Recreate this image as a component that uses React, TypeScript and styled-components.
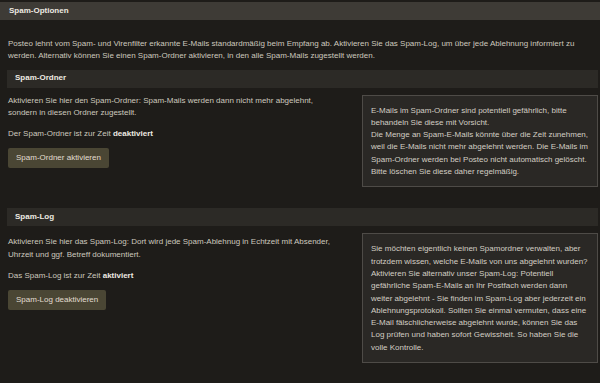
import styled, { createGlobalStyle } from "styled-components"

const GlobalStyle = createGlobalStyle`
	html, body {
		margin: 0;
		padding: 0;
		background: #1e1c19;
	}
	body {
		font-family: "Liberation Sans", Arial, sans-serif;
		font-size: 8px;
		line-height: 12.3px;
		color: #cdc8be;
	}
`

const Page = styled.div`
	min-height: 383px;
	padding-top: 2px;
	box-sizing: border-box;
	background: #1e1c19;
`

const MainHeader = styled.div`
	display: flex;
	align-items: center;
	height: 18px;
	padding-left: 9px;
	background: #3e3b36;
	color: #eeeae2;
	font-weight: bold;
`

const Intro = styled.p`
	margin: 18px 0 0;
	padding: 0 8px;
`

const Section = styled.section<{ $gap: number }>`
	margin: ${(p) => p.$gap}px 2px 0 7px;
`

const SubHeader = styled.div`
	display: flex;
	align-items: center;
	height: 18px;
	padding-left: 8px;
	background: #2c2a26;
	color: #eeeae2;
	font-weight: bold;
`

const Row = styled.div`
	display: flex;
	align-items: flex-start;
	margin-top: 7px;
`

const LeftCol = styled.div<{ $top: number }>`
	flex: 1;
	padding: ${(p) => p.$top}px 12px 0 1px;
`

const Para = styled.p`
	margin: 0;
	white-space: nowrap;
`

const Status = styled.p`
	margin: 9px 0 0;
	b {
		color: #eeeae2;
	}
`

const Button = styled.button`
	display: block;
	height: 20px;
	margin-top: 8px;
	padding: 0 8px;
	border: none;
	border-radius: 2px;
	background: #4a4634;
	color: #e2ddd1;
	font: inherit;
	cursor: pointer;
`

const InfoBox = styled.div`
	width: 236px;
	box-sizing: border-box;
	padding: 9px 8px 8px;
	background: #2a2825;
	border: 1px solid #4e4b47;
	white-space: nowrap;
	color: #d3cec4;
`

function App() {
	return (
		<Page>
			<GlobalStyle />
			<MainHeader>Spam-Optionen</MainHeader>
			<Intro>
				Posteo lehnt vom Spam- und Virenfilter erkannte E-Mails standardmäßig beim Empfang ab. Aktivieren Sie das Spam-Log, um über jede Ablehnung informiert zu
				<br />
				werden. Alternativ können Sie einen Spam-Ordner aktivieren, in den alle Spam-Mails zugestellt werden.
			</Intro>

			<Section $gap={7}>
				<SubHeader>Spam-Ordner</SubHeader>
				<Row>
					<LeftCol $top={0}>
						<Para>
							Aktivieren Sie hier den Spam-Ordner: Spam-Mails werden dann nicht mehr abgelehnt,
							<br />
							sondern in diesen Ordner zugestellt.
						</Para>
						<Status>
							Der Spam-Ordner ist zur Zeit <b>deaktiviert</b>
						</Status>
						<Button>Spam-Ordner aktivieren</Button>
					</LeftCol>
					<InfoBox>
						E-Mails im Spam-Ordner sind potentiell gefährlich, bitte
						<br />
						behandeln Sie diese mit Vorsicht.
						<br />
						Die Menge an Spam-E-Mails könnte über die Zeit zunehmen,
						<br />
						weil die E-Mails nicht mehr abgelehnt werden. Die E-Mails im
						<br />
						Spam-Ordner werden bei Posteo nicht automatisch gelöscht.
						<br />
						Bitte löschen Sie diese daher regelmäßig.
					</InfoBox>
				</Row>
			</Section>

			<Section $gap={21}>
				<SubHeader>Spam-Log</SubHeader>
				<Row>
					<LeftCol $top={3}>
						<Para>
							Aktivieren Sie hier das Spam-Log: Dort wird jede Spam-Ablehnug in Echtzeit mit Absender,
							<br />
							Uhrzeit und ggf. Betreff dokumentiert.
						</Para>
						<Status>
							Das Spam-Log ist zur Zeit <b>aktiviert</b>
						</Status>
						<Button>Spam-Log deaktivieren</Button>
					</LeftCol>
					<InfoBox>
						Sie möchten eigentlich keinen Spamordner verwalten, aber
						<br />
						trotzdem wissen, welche E-Mails von uns abgelehnt wurden?
						<br />
						Aktivieren Sie alternativ unser Spam-Log: Potentiell
						<br />
						gefährliche Spam-E-Mails an Ihr Postfach werden dann
						<br />
						weiter abgelehnt - Sie finden im Spam-Log aber jederzeit ein
						<br />
						Ablehnungsprotokoll. Sollten Sie einmal vermuten, dass eine
						<br />
						E-Mail fälschlicherweise abgelehnt wurde, können Sie das
						<br />
						Log prüfen und haben sofort Gewissheit. So haben Sie die
						<br />
						volle Kontrolle.
					</InfoBox>
				</Row>
			</Section>
		</Page>
	)
}

export default App
